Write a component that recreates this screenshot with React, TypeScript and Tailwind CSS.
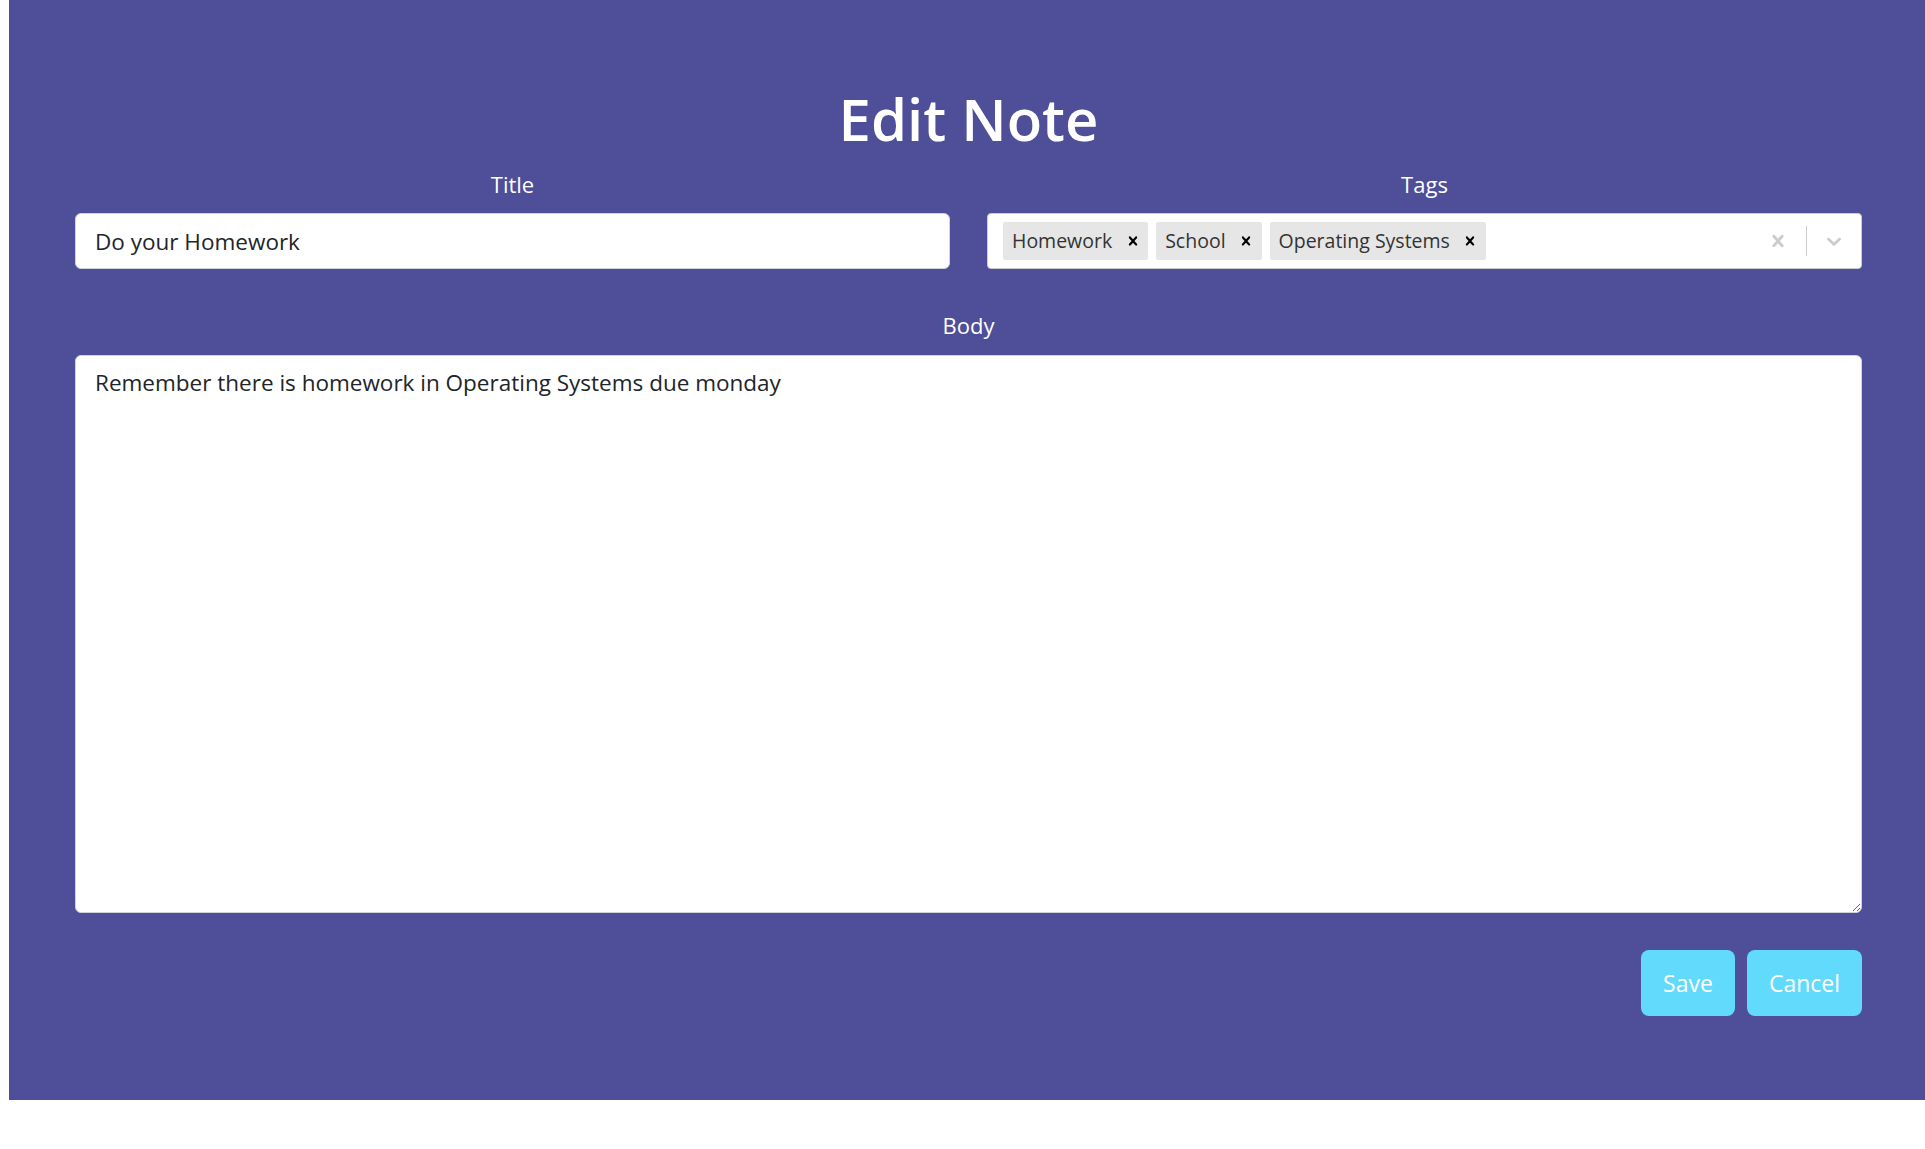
import React from "react";

function XIcon({ className }: { className?: string }) {
  return (
    <svg viewBox="0 0 20 20" className={className} fill="currentColor" aria-hidden="true">
      <path d="M14.348 14.849c-0.469 0.469-1.229 0.469-1.697 0l-2.651-3.030-2.651 3.029c-0.469 0.469-1.229 0.469-1.697 0-0.469-0.469-0.469-1.229 0-1.697l2.758-3.15-2.759-3.152c-0.469-0.469-0.469-1.228 0-1.697s1.228-0.469 1.697 0l2.652 3.031 2.651-3.031c0.469-0.469 1.228-0.469 1.697 0s0.469 1.229 0 1.697l-2.758 3.152 2.758 3.15c0.469 0.469 0.469 1.229 0 1.698z" />
    </svg>
  );
}

function Chevron({ className }: { className?: string }) {
  return (
    <svg viewBox="0 0 20 20" className={className} fill="currentColor" aria-hidden="true">
      <path d="M4.516 7.548c0.436-0.446 1.043-0.481 1.576 0l3.908 3.747 3.908-3.747c0.533-0.481 1.141-0.446 1.574 0 0.436 0.445 0.408 1.197 0 1.615-0.406 0.418-4.695 4.502-4.695 4.502-0.217 0.223-0.502 0.335-0.787 0.335s-0.57-0.112-0.789-0.335c0 0-4.287-4.084-4.695-4.502s-0.436-1.17 0-1.615z" />
    </svg>
  );
}

function Chip({ label }: { label: string }) {
  return (
    <div className="flex items-center h-[38px] bg-[#e6e6e6] rounded-[2px]">
      <span className="pl-[9px] pr-[5px] text-[19.5px] text-[#333333]">{label}</span>
      <span className="flex items-center justify-center w-[31px] h-full text-black">
        <XIcon className="w-[18px] h-[18px]" />
      </span>
    </div>
  );
}

export default function App() {
  return (
    <div
      className="min-h-screen bg-white pl-[9px]"
      style={{ fontFamily: '"Open Sans", "Noto Sans", sans-serif' }}
    >
      <div className="bg-[#4f4e98] h-[1100px] pl-[66px] pr-[63px] pt-[83px] flex flex-col">
        <h1 className="text-white text-center text-[58px] leading-[72px] font-semibold">Edit Note</h1>

        <div className="grid grid-cols-2 gap-[37px] mt-[15px]">
          <div className="flex flex-col">
            <label className="text-white text-center text-[22px] leading-[28px] mb-[15px]">Title</label>
            <input
              className="h-[56px] bg-white rounded-[6px] border border-[#ced4da] px-[19px] text-[22.5px] text-[#212529] outline-none"
              defaultValue="Do your Homework"
            />
          </div>
          <div className="flex flex-col">
            <label className="text-white text-center text-[22px] leading-[28px] mb-[15px]">Tags</label>
            <div className="h-[56px] bg-white rounded-[4px] border border-[#cccccc] flex items-center">
              <div className="flex-1 flex items-center gap-[8px] pl-[15px]">
                <Chip label="Homework" />
                <Chip label="School" />
                <Chip label="Operating Systems" />
              </div>
              <div className="flex items-center h-full">
                <span className="flex items-center justify-center w-[56px] text-[#cccccc]">
                  <XIcon className="w-[24px] h-[24px]" />
                </span>
                <span className="w-px h-[30px] bg-[#cccccc]" />
                <span className="flex items-center justify-center w-[54px] text-[#cccccc]">
                  <Chevron className="w-[24px] h-[24px]" />
                </span>
              </div>
            </div>
          </div>
        </div>

        <label className="text-white text-center text-[22px] leading-[28px] mt-[42px] mb-[16px]">Body</label>
        <textarea
          className="h-[558px] bg-white rounded-[6px] border border-[#ced4da] px-[19px] py-[10px] text-[22.5px] leading-[33px] text-[#212529] outline-none resize-y"
          defaultValue="Remember there is homework in Operating Systems due monday"
        />

        <div className="flex justify-end gap-[12px] mt-[37px]">
          <button className="h-[66px] w-[94px] rounded-[8px] bg-[#61dafb] text-white text-[23px]">Save</button>
          <button className="h-[66px] w-[115px] rounded-[8px] bg-[#61dafb] text-white text-[23px]">Cancel</button>
        </div>
      </div>
    </div>
  );
}
